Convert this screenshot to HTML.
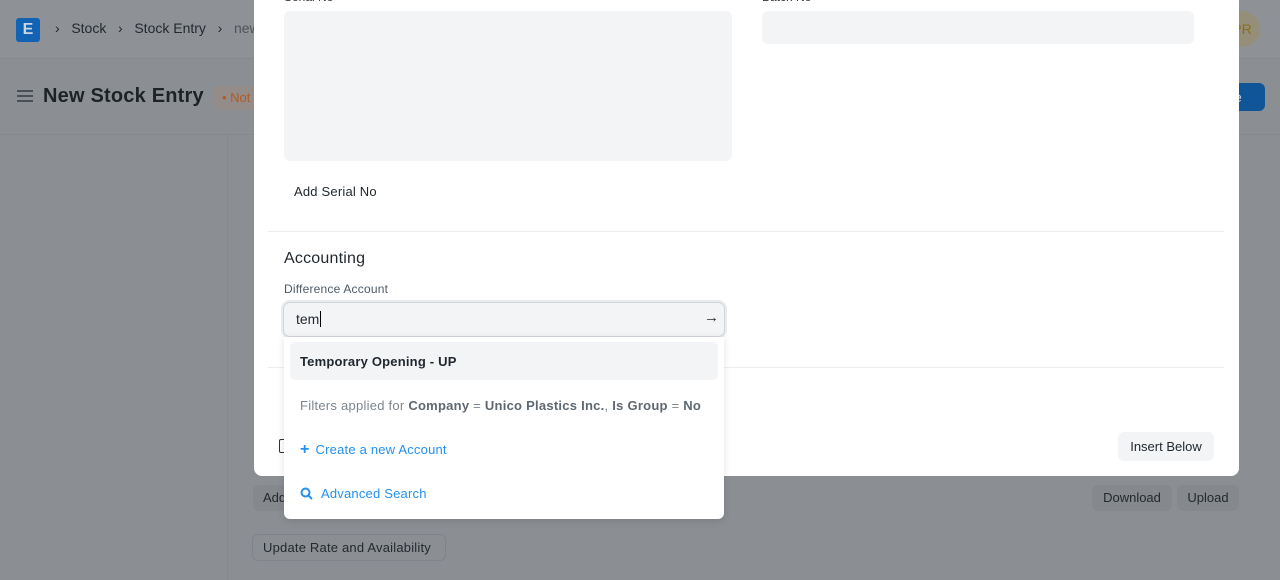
<!DOCTYPE html>
<html><head><style>
*{box-sizing:border-box;margin:0;padding:0}
body{width:1280px;height:580px;overflow:hidden;background:#8b8f93;font-family:"Liberation Sans",sans-serif;position:relative;color:#1f272e}
.a{position:absolute}
.t{white-space:nowrap}
</style></head><body>
<div class="a" style="left:0;top:0;width:1280px;height:59px;background:#8e9297;border-bottom:1px solid #85898e"></div>
<div class="a" style="left:16px;top:18px;width:24px;height:24px;background:#1363b4;border-radius:3px;color:#c9d6e4;font-weight:bold;font-size:16px;text-align:center;line-height:24px">E</div>
<div class="a t" style="left:55px;top:20px;font-size:14px;color:#24292e">›&nbsp;&nbsp;&nbsp;Stock&nbsp;&nbsp;&nbsp;›&nbsp;&nbsp;&nbsp;Stock Entry&nbsp;&nbsp;&nbsp;›&nbsp;&nbsp;&nbsp;<span style="color:#505459">new</span></div>
<div class="a" style="left:1224px;top:11px;width:36px;height:36px;border-radius:50%;background:#958f7a;color:#8c6d1d;font-size:14px;text-align:center;line-height:36px">PR</div>
<div class="a" style="left:0;top:134px;width:1280px;height:1px;background:#85898e"></div>
<div class="a" style="left:227px;top:135px;width:1px;height:445px;background:#85898e"></div>
<div class="a" style="left:17px;top:90px;width:16px;height:2px;background:#4a4f55;box-shadow:0 5px 0 #4a4f55,0 10px 0 #4a4f55"></div>
<div class="a t" style="left:43px;top:85px;font-size:20px;font-weight:bold;color:#1d2227;letter-spacing:0.2px">New Stock Entry</div>
<div class="a t" style="left:214px;top:86px;width:60px;height:24px;background:#938c89;border-radius:5px;color:#b45a22;font-size:13px;line-height:24px;padding-left:8px">• Not</div>
<div class="a" style="left:1200px;top:83px;width:65px;height:28px;background:#0f5597;border-radius:6px;color:#c9d6e4;font-size:14px;line-height:28px;padding-left:34px">e</div>
<div class="a t" style="left:253px;top:485px;width:60px;height:26px;background:#85898d;border-radius:6px;font-size:13px;line-height:26px;padding-left:10px;color:#24292e">Add</div>
<div class="a t" style="left:1092px;top:485px;width:80px;height:26px;background:#85898d;border-radius:6px;font-size:13px;line-height:26px;text-align:center;color:#24292e">Download</div>
<div class="a t" style="left:1177px;top:485px;width:62px;height:26px;background:#85898d;border-radius:6px;font-size:13px;line-height:26px;text-align:center;color:#24292e">Upload</div>
<div class="a t" style="left:252px;top:534px;width:194px;height:27px;border:1px solid #80848a;border-radius:6px;font-size:13px;line-height:25px;padding-left:10px;color:#24292e;letter-spacing:0.2px">Update Rate and Availability</div>

<div class="a" style="left:254px;top:-10px;width:985px;height:486px;background:#fff;border-radius:0 0 8px 8px"></div>
<div class="a t" style="left:284px;top:-10px;font-size:12px;color:#333">Serial No</div>
<div class="a t" style="left:762px;top:-10px;font-size:12px;color:#333">Batch No</div>
<div class="a" style="left:284px;top:11px;width:448px;height:150px;background:#f3f4f6;border-radius:6px"></div>
<div class="a" style="left:762px;top:11px;width:432px;height:33px;background:#f3f4f6;border-radius:6px"></div>
<div class="a t" style="left:294px;top:184px;font-size:13px;letter-spacing:0.2px">Add Serial No</div>
<div class="a" style="left:268px;top:231px;width:956px;height:1px;background:#ebeef0"></div>
<div class="a t" style="left:284px;top:250px;font-size:16px;letter-spacing:0.2px">Accounting</div>
<div class="a t" style="left:284px;top:282px;font-size:12px;color:#4c5a67;letter-spacing:0.2px">Difference Account</div>
<div class="a" style="left:283px;top:302px;width:442px;height:35px;background:#f3f4f6;border:1px solid #d1d5da;border-radius:7px;box-shadow:0 0 0 2px #e9ecef"></div>
<div class="a t" style="left:296px;top:311px;font-size:14px">tem<span style="border-left:1px solid #000;margin-left:1px"></span></div>
<div class="a t" style="left:704px;top:309px;font-size:15px">→</div>
<div class="a" style="left:268px;top:367px;width:956px;height:1px;background:#ebeef0"></div>
<div class="a" style="left:279px;top:439px;width:10px;height:14px;border:1.5px solid #333;border-radius:2px"></div>
<div class="a t" style="left:1118px;top:432px;width:96px;height:29px;background:#f3f4f6;border-radius:6px;font-size:13px;line-height:29px;text-align:center">Insert Below</div>

<div class="a" style="left:284px;top:337px;width:440px;height:182px;background:#fff;border-radius:0 0 6px 6px;box-shadow:0 2px 8px rgba(0,0,0,.12)"></div>
<div class="a" style="left:290px;top:342px;width:428px;height:38px;background:#f3f4f6;border-radius:5px"></div>
<div class="a t" style="left:300px;top:354px;font-size:13px;font-weight:bold;color:#1f272e;letter-spacing:0.2px">Temporary Opening - UP</div>
<div class="a t" style="left:300px;top:398px;font-size:13px;color:#7c858d;letter-spacing:0.25px">Filters applied for <b style="color:#5f6870">Company</b> = <b style="color:#5f6870">Unico Plastics Inc.</b>, <b style="color:#5f6870">Is Group</b> = <b style="color:#5f6870">No</b></div>
<div class="a t" style="left:300px;top:441px;font-size:13px;color:#2490ef;letter-spacing:0.2px"><b style="font-size:16px;margin-right:6px">+</b>Create a new Account</div>
<svg class="a" style="left:300px;top:487px" width="13" height="13" viewBox="0 0 13 13"><circle cx="5.5" cy="5.5" r="4" fill="none" stroke="#2490ef" stroke-width="2"/><path d="M8.5 8.5L12 12" stroke="#2490ef" stroke-width="2"/></svg>
<div class="a t" style="left:321px;top:486px;font-size:13px;color:#2490ef;letter-spacing:0.2px">Advanced Search</div>
</body></html>
